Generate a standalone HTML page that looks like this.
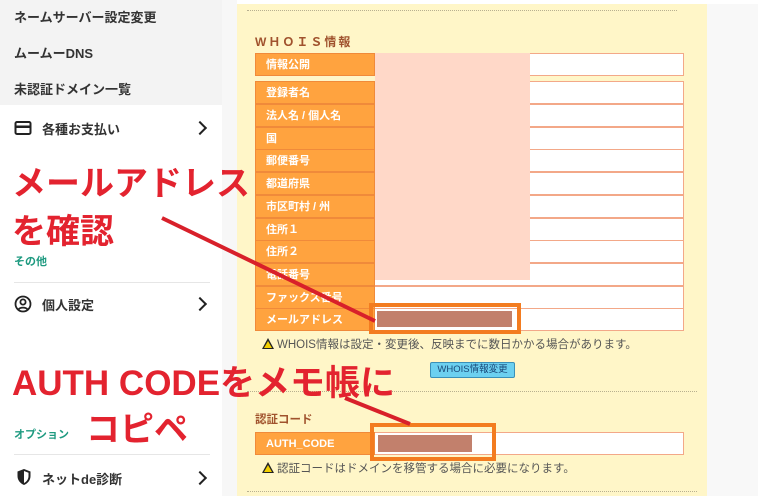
<!DOCTYPE html>
<html><head><meta charset="utf-8"><style>
*{margin:0;padding:0;box-sizing:border-box}
body{width:780px;height:496px;overflow:hidden;background:#fff;position:relative;font-family:"Liberation Sans","Noto Sans CJK JP",sans-serif;color:#333}
.a{position:absolute;white-space:nowrap}
.side{font-size:13px;font-weight:bold;color:#333}
.chev{position:absolute;left:195px;width:10px;height:10px;border-right:2px solid #222;border-bottom:2px solid #222;transform:rotate(-45deg)}
.lab{position:absolute;left:255px;width:120px;background:#ffa33f;border:1px solid #f08a3a;color:#fff;font-size:11px;font-weight:bold;padding-left:10px;line-height:22px;height:23px}
.val{position:absolute;left:375px;width:309px;height:23px;background:#fff;border:1px solid #f3a888;border-left:none}
.red{color:#e3232f;font-weight:bold;position:absolute;white-space:nowrap}
.hl{position:absolute;border:4px solid #f37c20}
.br{position:absolute;background:#c2806c}
.dot{position:absolute;left:247px;width:450px;border-top:1px dotted #b8b090}
.note{font-size:11.5px;color:#555}
.warn{display:inline-block;width:0;height:0;border-left:6px solid transparent;border-right:6px solid transparent;border-bottom:11px solid #222;vertical-align:-1px;margin-right:3px;position:relative}
.warn:after{content:"";position:absolute;left:-4px;top:3px;border-left:4px solid transparent;border-right:4px solid transparent;border-bottom:7px solid #f3d000}
</style></head><body>
<div class="a" style="left:0;top:0;width:222px;height:105px;background:#f3f3f3"></div>
<div class="a" style="left:222px;top:0;width:15px;height:496px;background:#f7f7f7"></div>
<div class="a" style="left:707px;top:4px;width:51px;height:492px;background:#f8f8f8"></div>
<div class="a" style="left:237px;top:4px;width:470px;height:492px;background:#fff6c8"></div>
<div class="dot" style="top:10px;width:430px"></div>

<div class="a side" style="left:14px;top:7px">ネームサーバー設定変更</div>
<div class="a side" style="left:14px;top:43px">ムームーDNS</div>
<div class="a side" style="left:14px;top:79px">未認証ドメイン一覧</div>
<svg class="a" style="left:14px;top:120px" width="18" height="16" viewBox="0 0 18 16"><rect x="1.5" y="2" width="15" height="12" rx="1.5" fill="none" stroke="#222" stroke-width="2"/><rect x="1.5" y="5.5" width="15" height="2.5" fill="#222"/></svg>
<div class="a side" style="left:42px;top:119px">各種お支払い</div>
<div class="chev" style="top:123px"></div>
<div class="a" style="left:14px;top:253px;font-size:11px;font-weight:bold;color:#1e9a80">その他</div>
<div class="a" style="left:14px;top:282px;width:196px;border-top:1px solid #e6e6e6"></div>
<svg class="a" style="left:14px;top:295px" width="18" height="18" viewBox="0 0 18 18"><circle cx="9" cy="9" r="7.5" fill="none" stroke="#222" stroke-width="1.8"/><circle cx="9" cy="7" r="2.6" fill="none" stroke="#222" stroke-width="1.8"/><path d="M4.5 14.5c1.5-2.5 7.5-2.5 9 0" fill="none" stroke="#222" stroke-width="1.8"/></svg>
<div class="a side" style="left:42px;top:295px">個人設定</div>
<div class="chev" style="top:299px"></div>
<div class="a" style="left:14px;top:426px;font-size:11px;font-weight:bold;color:#1e9a80">オプション</div>
<div class="a" style="left:14px;top:454px;width:196px;border-top:1px solid #e6e6e6"></div>
<svg class="a" style="left:16px;top:468px" width="16" height="18" viewBox="0 0 16 18"><path d="M8 1L1.5 3.5V8c0 4.5 3 7.5 6.5 9 3.5-1.5 6.5-4.5 6.5-9V3.5z" fill="#222"/><path d="M8 3v12c2.5-1.3 4.5-3.7 4.5-7V4.7z" fill="#fff"/></svg>
<div class="a side" style="left:42px;top:469px">ネットde診断</div>
<div class="chev" style="top:473px"></div>

<div class="a" style="left:255px;top:33px;font-size:12px;font-weight:bold;color:#a0522d;letter-spacing:2px">WＨＯＩＳ情報</div>
<div class="lab" style="top:53px">情報公開</div><div class="val" style="top:53px"></div>
<div class="lab" style="top:81px">登録者名</div><div class="val" style="top:81px"></div>
<div class="lab" style="top:104px">法人名 / 個人名</div><div class="val" style="top:104px"></div>
<div class="lab" style="top:127px">国</div><div class="val" style="top:127px"></div>
<div class="lab" style="top:149px">郵便番号</div><div class="val" style="top:149px"></div>
<div class="lab" style="top:172px">都道府県</div><div class="val" style="top:172px"></div>
<div class="lab" style="top:195px">市区町村 / 州</div><div class="val" style="top:195px"></div>
<div class="lab" style="top:218px">住所１</div><div class="val" style="top:218px"></div>
<div class="lab" style="top:240px">住所２</div><div class="val" style="top:240px"></div>
<div class="lab" style="top:263px">電話番号</div><div class="val" style="top:263px"></div>
<div class="lab" style="top:286px">ファックス番号</div><div class="val" style="top:286px"></div>
<div class="lab" style="top:308px">メールアドレス</div><div class="val" style="top:308px"></div>
<div class="a" style="left:375px;top:53px;width:155px;height:227px;background:#ffd8c8"></div>
<div class="hl" style="left:369px;top:303px;width:152px;height:31px"></div>
<div class="br" style="left:377px;top:311px;width:135px;height:16px"></div>
<div class="a note" style="left:262px;top:336px"><span class="warn"></span>WHOIS情報は設定・変更後、反映までに数日かかる場合があります。</div>
<div class="a" style="left:430px;top:362px;width:85px;height:16px;background:#6cd0f0;border:1px solid #3a90b8;border-radius:2px;font-size:9.5px;color:#1a4a7a;text-align:center;line-height:14px">WHOIS情報変更</div>
<div class="dot" style="top:391px"></div>
<div class="a" style="left:255px;top:411px;font-size:11.5px;font-weight:bold;color:#a0522d">認証コード</div>
<div class="lab" style="top:432px">AUTH_CODE</div><div class="val" style="top:432px"></div>
<div class="hl" style="left:370px;top:423px;width:126px;height:38px"></div>
<div class="br" style="left:378px;top:435px;width:94px;height:17px"></div>
<div class="a note" style="left:262px;top:460px"><span class="warn"></span>認証コードはドメインを移管する場合に必要になります。</div>
<div class="dot" style="top:491px"></div>

<svg class="a" style="left:0;top:0" width="780" height="496"><line x1="162" y1="218" x2="375" y2="321" stroke="#d8202a" stroke-width="4"/><line x1="345" y1="398" x2="410" y2="424" stroke="#d8202a" stroke-width="4"/></svg>
<div class="red" style="left:12px;top:156px;font-size:34px;letter-spacing:0px">メールアドレス</div>
<div class="red" style="left:12px;top:204px;font-size:34px;letter-spacing:0px">を確認</div>
<div class="red" style="left:12px;top:355px;font-size:35px">AUTH CODEをメモ帳に</div>
<div class="red" style="left:86px;top:402px;font-size:34px;letter-spacing:0px">コピペ</div>
</body></html>
